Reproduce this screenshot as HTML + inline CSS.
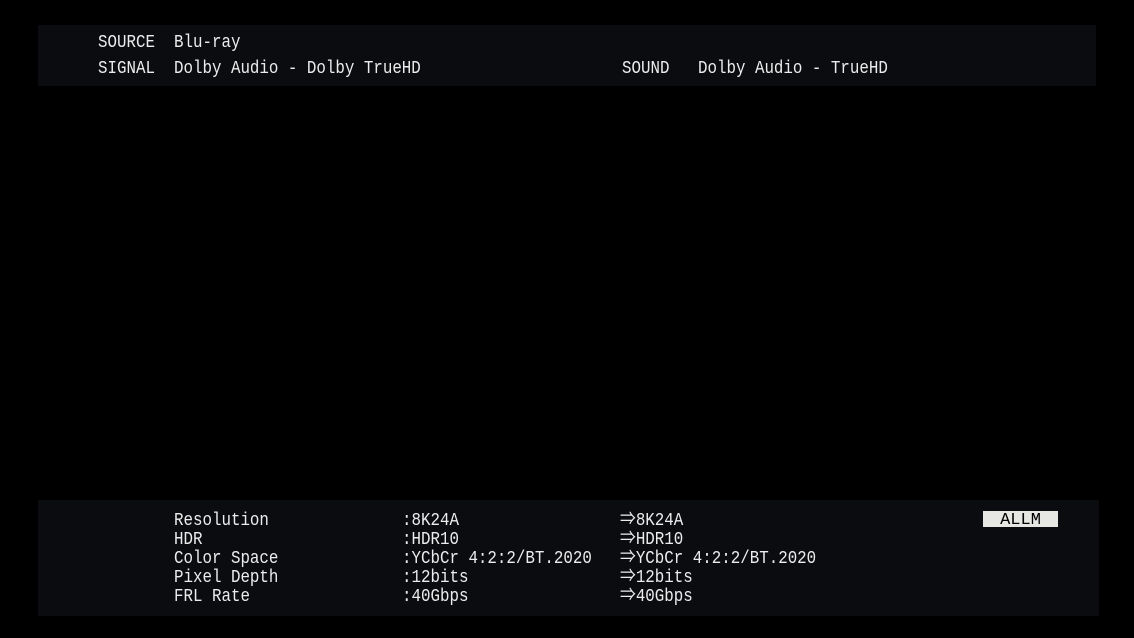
<!DOCTYPE html>
<html><head><meta charset="utf-8"><style>
html,body{margin:0;padding:0;background:#000;width:1134px;height:638px;overflow:hidden}
body{position:relative;font-family:"Liberation Mono","Noto Sans CJK JP",monospace;color:#ececec}
.p{position:absolute;background:#0b0c10}
.t{position:absolute;white-space:pre;font-size:18.5px;line-height:19px;transform:scaleX(0.855);transform-origin:0 0}
</style></head><body>
<div class="p" style="left:38px;top:25px;width:1058px;height:61px"></div>
<div class="p" style="left:38px;top:500px;width:1061px;height:116px"></div>
<div class="t" style="left:98px;top:33px">SOURCE</div>
<div class="t" style="left:174px;top:33px">Blu-ray</div>
<div class="t" style="left:98px;top:59px">SIGNAL</div>
<div class="t" style="left:174px;top:59px">Dolby Audio - Dolby TrueHD</div>
<div class="t" style="left:622px;top:59px">SOUND</div>
<div class="t" style="left:698px;top:59px">Dolby Audio - TrueHD</div>
<div class="t" style="left:174px;top:511px">Resolution
HDR
Color Space
Pixel Depth
FRL Rate</div>
<div class="t" style="left:402px;top:511px">:8K24A
:HDR10
:YCbCr 4:2:2/BT.2020
:12bits
:40Gbps</div>
<div class="t" style="left:620px;top:511px">⇒8K24A
⇒HDR10
⇒YCbCr 4:2:2/BT.2020
⇒12bits
⇒40Gbps</div>
<div style="position:absolute;left:983px;top:511px;width:75px;height:16px;background:#e6e6e2;color:#000;font-size:17px;line-height:19px;text-align:center;font-family:'Liberation Mono',monospace;overflow:hidden">ALLM</div>
</body></html>
